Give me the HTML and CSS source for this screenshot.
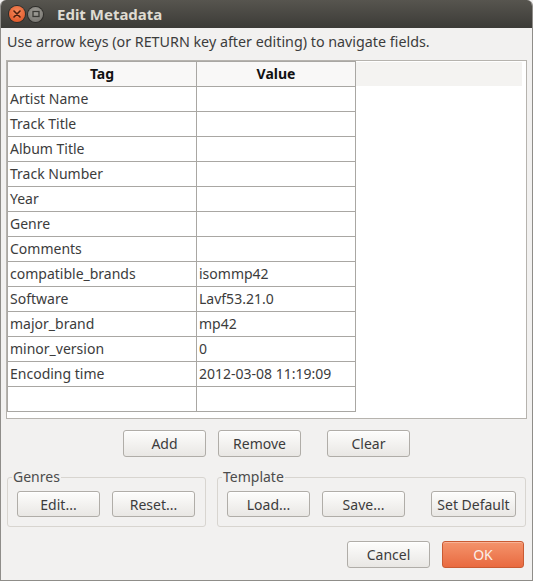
FILE: index.html
```html
<!DOCTYPE html>
<html lang="en">
<head>
  <meta charset="UTF-8" />
  <meta name="viewport" content="width=device-width, initial-scale=1.0" />
  <title>Edit Metadata</title>
  <link rel="stylesheet" href="styles.css">
</head>
<body>
  <div class="window">
    <div class="titlebar">
      <span class="wbtn close">
        <svg width="8" height="8" viewBox="0 0 8 8"><path d="M1 1 L7 7 M7 1 L1 7" stroke="#4a1e0e" stroke-width="1.6" stroke-linecap="round"/></svg>
      </span>
      <span class="wbtn minimize">
        <svg width="8" height="8" viewBox="0 0 8 8"><rect x="1" y="1.5" width="6" height="5" fill="none" stroke="#3a3935" stroke-width="1.3"/></svg>
      </span>
      <span class="title">Edit Metadata</span>
    </div>

    <div class="content">
      <div class="hint">Use arrow keys (or RETURN key after editing) to navigate fields.</div>

      <div class="table-frame">
        <div class="grid">
          <div class="cell head">Tag</div>
          <div class="cell head">Value</div>
          <div class="cell">Artist Name</div><div class="cell"></div>
          <div class="cell">Track Title</div><div class="cell"></div>
          <div class="cell">Album Title</div><div class="cell"></div>
          <div class="cell">Track Number</div><div class="cell"></div>
          <div class="cell">Year</div><div class="cell"></div>
          <div class="cell">Genre</div><div class="cell"></div>
          <div class="cell">Comments</div><div class="cell"></div>
          <div class="cell">compatible_brands</div><div class="cell">isommp42</div>
          <div class="cell">Software</div><div class="cell">Lavf53.21.0</div>
          <div class="cell">major_brand</div><div class="cell">mp42</div>
          <div class="cell">minor_version</div><div class="cell">0</div>
          <div class="cell">Encoding time</div><div class="cell">2012-03-08 11:19:09</div>
          <div class="cell"></div><div class="cell"></div>
        </div>
        <div class="filler">
          <div class="filler-head"></div>
        </div>
      </div>

      <div class="row-buttons">
        <button class="btn add">Add</button>
        <button class="btn remove">Remove</button>
        <button class="btn clear">Clear</button>
      </div>

      <div class="groups">
        <fieldset class="group genres">
          <legend>Genres</legend>
          <button class="btn">Edit...</button>
          <button class="btn">Reset...</button>
        </fieldset>
        <fieldset class="group template">
          <legend>Template</legend>
          <button class="btn">Load...</button>
          <button class="btn">Save...</button>
          <button class="btn set-default">Set Default</button>
        </fieldset>
      </div>

      <div class="dialog-buttons">
        <button class="btn">Cancel</button>
        <button class="btn ok">OK</button>
      </div>
    </div>
  </div>
</body>
</html>
```

FILE: styles.css
```css
body {
  margin: 0;
  background: #f2f1f0;
  font-family: "Noto Sans", "Open Sans", sans-serif;
  font-size: 14px;
  color: #3c3c3c;
}
.window {
  width: 533px;
  height: 581px;
  box-sizing: border-box;
  background: #f2f1f0;
  border: 1px solid #8f8d89;
  border-top: none;
  border-radius: 6px 6px 0 0;
  overflow: hidden;
}
.titlebar {
  height: 28px;
  display: flex;
  align-items: center;
  padding-left: 9px;
  background: linear-gradient(#57554f, #3c3b37);
  margin: 0 -1px;
}
.wbtn {
  width: 16px;
  height: 16px;
  border-radius: 50%;
  display: flex;
  align-items: center;
  justify-content: center;
  margin-right: 3px;
}
.close {
  background: radial-gradient(circle at 50% 35%, #f68a5c, #dc4d1e);
  box-shadow: 0 0 0 1px #2e2d2a;
}
.minimize {
  width: 15px;
  height: 15px;
  background: radial-gradient(circle at 50% 35%, #a09e98, #6f6d68);
  box-shadow: 0 0 0 1px #2e2d2a;
}
.title {
  margin-left: 11px;
  font-weight: bold;
  font-size: 15px;
  color: #dfdbd2;
}
.content {
  padding: 0 5px;
}
.hint {
  height: 32px;
  line-height: 28px;
  padding-left: 1px;
  font-size: 14.3px;
}
.table-frame {
  height: 359px;
  box-sizing: border-box;
  border: 1px solid #b6b3ae;
  background: #fff;
  display: flex;
  padding: 0 4px 0 0;
}
.grid {
  display: grid;
  grid-template-columns: 189px 159px;
  grid-auto-rows: 25px;
  border-left: 1px solid #a9a7a3;
  border-top: 1px solid #a9a7a3;
  align-self: flex-start;
}
.cell {
  border-right: 1px solid #a9a7a3;
  border-bottom: 1px solid #a9a7a3;
  padding-left: 2px;
  line-height: 23px;
  white-space: nowrap;
}
.cell.head {
  height: 24px;
  font-weight: bold;
  color: #111;
  text-align: center;
  background: #f9f8f7;
  padding-left: 0;
}
.filler {
  flex: 1;
  padding-top: 1px;
}
.filler-head {
  height: 24px;
  background: #f4f3f1;
}
.btn {
  font-family: inherit;
  font-size: 14px;
  color: #3c3c3c;
  height: 27px;
  width: 83px;
  padding: 0;
  border: 1px solid #b0ada8;
  border-radius: 3px;
  background: linear-gradient(#fdfdfc, #e9e7e4);
  box-shadow: inset 0 1px #fff;
}
.row-buttons {
  display: flex;
  margin-top: 11px;
  padding-left: 117px;
}
.remove {
  margin-left: 12px;
}
.clear {
  margin-left: 26px;
}
.groups {
  display: flex;
  margin-top: 12px;
  padding-left: 1px;
}
.group {
  margin: 0;
  border: 1px solid #d8d5d0;
  border-radius: 3px;
  padding: 0 9px 9px 9px;
  display: flex;
  height: 58px;
  box-sizing: border-box;
}
.group legend {
  padding: 0 1px;
  margin-left: -5px;
  line-height: 16px;
  color: #4c4c4c;
}
.genres {
  width: 199px;
  gap: 12px;
}
.template {
  width: 309px;
  margin-left: 11px;
  gap: 12px;
}
.set-default {
  margin-left: 14px;
  width: 85px;
}
.group .btn {
  height: 26px;
  margin-top: 6px;
}
.dialog-buttons {
  display: flex;
  justify-content: flex-end;
  gap: 12px;
  margin-top: 14px;
  padding-right: 3px;
}
.ok {
  width: 82px;
  color: #fbefe9;
  border-color: #c95b33;
  background: linear-gradient(#f4946c, #e96a40);
  box-shadow: inset 0 1px #f8b296;
}
```
